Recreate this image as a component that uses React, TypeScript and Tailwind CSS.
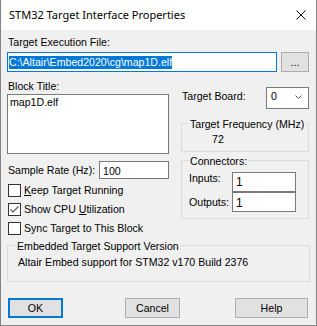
import type { ReactNode } from 'react';

function Legend({ children, className = '' }: { children: ReactNode; className?: string }) {
  return <legend className={`px-[1px] pt-[2px] leading-[13px] ${className}`}>{children}</legend>;
}

function CheckBox({ checked = false, children }: { checked?: boolean; children: ReactNode }) {
  return (
    <div className="flex h-[13px] items-center pl-[1px]">
      <span className="flex h-[13px] w-[13px] shrink-0 items-center justify-center border border-[#333333] bg-white">
        {checked && (
          <svg width="9" height="8" viewBox="0 0 9 8">
            <polyline points="0.5,3.5 3,6 8.5,0.5" fill="none" stroke="#666666" strokeWidth="1.4" />
          </svg>
        )}
      </span>
      <span className="ml-[3px] whitespace-nowrap">{children}</span>
    </div>
  );
}

function Btn({ children, className = '', primary = false }: { children: ReactNode; className?: string; primary?: boolean }) {
  return (
    <div
      className={`flex h-[20px] items-center justify-center bg-[#e1e1e1] ${
        primary ? 'border-2 border-[#0078d7]' : 'border border-[#adadad]'
      } ${className}`}
    >
      {children}
    </div>
  );
}

export default function App() {
  return (
    <div className="flex h-[326px] w-[317px] flex-col border-x border-b border-[#858585] bg-[#f0f0f0] font-['Liberation_Sans',Arial,sans-serif] text-[10.6px] leading-[13px] text-black">
      {/* title bar */}
      <div className="flex h-[30px] shrink-0 items-center justify-between bg-white pl-[8px] pr-[10px]">
        <span className="font-['Noto_Sans',sans-serif] text-[11px] leading-[16px]">STM32 Target Interface Properties</span>
        <svg width="10" height="10" viewBox="0 0 10 10">
          <path d="M0.5 0.5 L9.5 9.5 M9.5 0.5 L0.5 9.5" stroke="#000" strokeWidth="1" />
        </svg>
      </div>

      <div className="flex flex-1 flex-col px-[6px]">
        <div className="mt-[6px] pl-[1px]">Target Execution File:</div>
        <div className="mt-[3px] flex">
          <div className="flex h-[20px] w-[270px] items-center border border-[#0078d7] bg-white pl-[1px]">
            <span className="bg-[#0078d7] text-white">C:\Altair\Embed2020\cg\map1D.elf</span>
          </div>
          <Btn className="ml-[4px] w-[28px]">...</Btn>
        </div>

        <div className="mt-[8px] flex">
          {/* left column */}
          <div className="flex w-[162px] flex-col">
            <div className="pl-[1px]">Block Title:</div>
            <div className="mt-[1px] h-[60px] border border-[#7a7a7a] bg-white pl-[2px] pt-[1px]">map1D.elf</div>
            <div className="mt-[7px] flex h-[18px] items-start">
              <span className="mt-[3px] pl-[1px]">Sample Rate (Hz):</span>
              <div className="ml-auto h-[18px] w-[70px] border border-[#7a7a7a] bg-white pl-[3px] pt-[3px]">100</div>
            </div>
            <div className="mt-[5px] flex flex-col gap-[6px]">
              <CheckBox>
                <span className="underline underline-offset-1">K</span>eep Target Running
              </CheckBox>
              <CheckBox checked>
                Show CPU <span className="underline underline-offset-1">U</span>tilization
              </CheckBox>
              <CheckBox>Sync Target to This Block</CheckBox>
            </div>
          </div>

          {/* right column */}
          <div className="ml-[12px] flex w-[128px] flex-col">
            <div className="mt-[7px] flex h-[22px] items-start">
              <span className="mt-[3px] pl-[1px]">Target Board:</span>
              <div className="ml-auto flex h-[22px] w-[43px] items-start border border-[#7a7a7a] bg-white pl-[4px] pt-[2px]">
                <span>0</span>
                <svg className="ml-auto mr-[6px] mt-[5px]" width="7" height="4" viewBox="0 0 7 4">
                  <polyline points="0.5,0.5 3.5,3.5 6.5,0.5" fill="none" stroke="#555555" strokeWidth="1" />
                </svg>
              </div>
            </div>
            <fieldset className="mt-[7px] h-[36px] border border-[#dcdcdc]">
              <Legend className="ml-[7px] whitespace-nowrap">Target Frequency (MHz)</Legend>
              <div className="mt-[2px] pl-[30px]">72</div>
            </fieldset>
            <fieldset className="mt-[1px] h-[66px] border border-[#dcdcdc]">
              <Legend className="ml-[7px]">Connectors:</Legend>
              <div className="mt-[4px] flex flex-col pr-[12px]">
                <div className="flex items-start">
                  <span className="pl-[7px]">Inputs:</span>
                  <div className="ml-auto h-[20px] w-[64px] border border-[#7a7a7a] bg-white pl-[3px] pt-[3px] text-[12px] leading-[13px]">1</div>
                </div>
                <div className="flex items-start">
                  <span className="mt-[4px] pl-[7px]">Outputs:</span>
                  <div className="ml-auto h-[20px] w-[64px] border border-[#7a7a7a] bg-white pl-[3px] pt-[4px] text-[12px] leading-[13px]">1</div>
                </div>
              </div>
            </fieldset>
          </div>
        </div>

        <fieldset className="mt-[3px] h-[44px] border border-[#dcdcdc]">
          <Legend className="ml-[8px]">Embedded Target Support Version</Legend>
          <div className="mt-[3px] pl-[10px]">Altair Embed support for STM32 v170 Build 2376</div>
        </fieldset>

        <div className="mt-[16px] flex">
          <Btn primary className="ml-[1px] w-[55px]">OK</Btn>
          <Btn className="ml-[62px] w-[55px]">Cancel</Btn>
          <Btn className="ml-[55px] w-[73px]">Help</Btn>
        </div>
      </div>
    </div>
  );
}
